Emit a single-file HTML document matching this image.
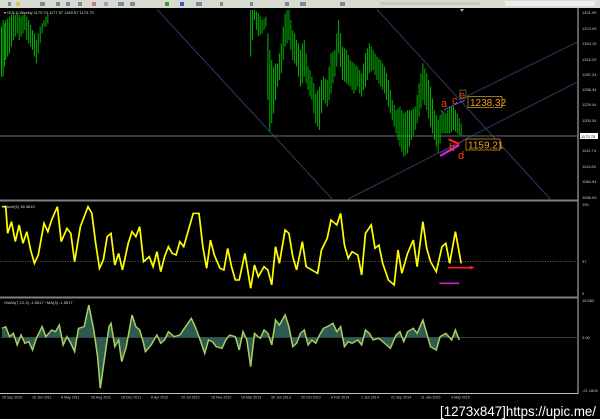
<!DOCTYPE html>
<html><head><meta charset="utf-8"><style>
html,body{margin:0;padding:0;background:#000;width:600px;height:419px;overflow:hidden;font-family:"Liberation Sans",sans-serif}
svg{position:absolute;left:0;top:0}
</style></head><body>
<svg width="600" height="419" viewBox="0 0 600 419">
<rect x="0" y="0" width="600" height="419" fill="#000"/>
<rect x="0" y="0" width="600" height="8" fill="#d8dcd0"/>
<g fill="#7a8a9a">
<rect x="8" y="2" width="3" height="4"/><rect x="16" y="2" width="4" height="4" fill="#e0c060"/><rect x="40" y="2" width="5" height="4"/><rect x="56" y="2" width="4" height="4"/><rect x="66" y="2" width="4" height="4"/><rect x="78" y="2" width="4" height="4"/><rect x="92" y="2" width="4" height="4" fill="#c08080"/><rect x="104" y="2" width="4" height="4" fill="#a0a0c0"/><rect x="118" y="2" width="6" height="4"/><rect x="130" y="2" width="5" height="4"/><rect x="165" y="2" width="4" height="4" fill="#30a030"/><rect x="180" y="2" width="4" height="4" fill="#3060c0"/><rect x="196" y="2" width="6" height="4"/><rect x="220" y="2" width="3" height="4"/><rect x="250" y="2" width="3" height="4"/><rect x="285" y="2" width="4" height="4"/><rect x="300" y="2" width="6" height="4"/><rect x="340" y="2" width="5" height="4"/><rect x="380" y="2" width="100" height="3" fill="#c8ccc0"/><rect x="505" y="1" width="90" height="5" fill="#eee"/>
</g>
<rect x="0" y="8" width="578" height="386" fill="#000"/>
<line x1="578" y1="8" x2="578" y2="394" stroke="#c0c0c0" stroke-width="1"/>
<rect x="0" y="199.5" width="578" height="2" fill="#808080"/>
<rect x="0" y="296.5" width="578" height="2" fill="#808080"/>
<line x1="0" y1="393.5" x2="578" y2="393.5" stroke="#c0c0c0"/>

<g transform="scale(0.3827,0.3333)">
<g stroke="#2e3560" stroke-width="3" fill="none">
<line x1="410" y1="28" x2="870" y2="600"/>
<line x1="985" y1="28" x2="1440" y2="600"/>
<line x1="905" y1="600" x2="1510" y2="245"/>
<line x1="1200" y1="300" x2="1510" y2="125"/>
<line x1="1150" y1="460" x2="1215" y2="420"/>
</g>
<line x1="0" y1="408" x2="1510" y2="408" stroke="#707070" stroke-width="3"/>
<path stroke="#00b400" stroke-width="2.6" fill="none" d="M4 80V230M8 60V230M12 70V200M15 60V180M20 55V170M25 50V160M30 45V140M35 40V120M40 45V110M45 40V100M50 45V120M55 50V110M60 45V100M65 40V90M70 50V120M75 60V130M80 75V140M85 90V150M90 100V170M95 120V190M100 100V160M105 80V130M110 70V100M115 60V80M120 50V80M125 40V70M655 30V170M660 30V120M665 30V60M670 35V90M675 40V110M680 50V105M685 60V100M690 55V90M695 50V80M700 100V300M705 150V395M710 180V370M715 200V340M720 190V300M725 190V260M730 160V240M735 130V220M740 80V180M745 40V140M750 30V130M755 30V120M760 60V150M765 90V180M770 100V190M775 120V200M780 130V230M785 150V260M790 130V250M795 120V230M800 160V250M805 200V270M810 210V290M815 230V300M820 250V340M825 280V370M830 270V380M835 260V390M840 240V340M845 230V300M850 235V310M855 240V320M860 200V300M865 160V280M870 155V250M875 150V230M880 100V200M885 60V160M890 100V200M895 140V240M900 145V245M905 150V250M910 165V255M915 180V260M920 185V270M925 190V280M930 195V270M935 200V260M940 210V280M945 220V290M950 190V270M955 160V260M960 145V240M965 130V220M970 140V215M975 150V210M980 160V225M985 170V240M990 175V250M995 180V260M1000 190V270M1005 200V280M1010 220V300M1015 240V320M1020 270V340M1025 300V360M1030 315V380M1035 330V400M1040 325V420M1045 320V440M1050 330V455M1055 340V470M1060 335V465M1065 330V460M1070 330V440M1075 330V420M1080 325V405M1085 320V390M1090 285V370M1095 250V350M1100 220V325M1105 190V300M1110 205V315M1115 220V330M1120 240V355M1125 260V380M1130 295V400M1135 330V420M1140 345V440M1145 360V460M1150 345V430M1155 330V400M1160 335V400M1165 340V400M1170 330V400M1175 320V400M1180 320V395M1185 320V390M1190 330V395M1195 340V400M1200 355V405M1205 370V410"/>
<line x1="1150" y1="468" x2="1200" y2="435" stroke="#e020e0" stroke-width="6"/>
<line x1="1172" y1="418" x2="1200" y2="432" stroke="#ff2020" stroke-width="6"/>
<line x1="1160" y1="330" x2="1215" y2="300" stroke="#5060c0" stroke-width="3"/>
</g>
<g font-size="11" fill="#ff3a10">
<text x="441" y="107">a</text><text x="452" y="104">c</text><text x="459" y="99">e</text>
<text x="449" y="151">b</text><text x="458" y="159">d</text>
</g>
<rect x="460" y="90" width="6" height="8" fill="none" stroke="#a08050" stroke-width="0.6"/>
<rect x="468" y="96.5" width="34" height="11" fill="#000" stroke="#c89020" stroke-width="0.8"/>
<text x="470" y="106" font-size="10" fill="#f0a020">1238.32</text>
<rect x="466" y="139" width="34" height="11" fill="#000" stroke="#c89020" stroke-width="0.8"/>
<text x="468" y="148.5" font-size="10" fill="#f0a020">1159.21</text>
<text x="4" y="14" font-size="4" fill="#ddd">▾ GOLD,Weekly  1179.70 1177.57 1169.57 1173.75</text>
<polygon points="460,9 464,9 462,12" fill="#aaa"/>
<g font-size="4" fill="#ccc">
<text x="582" y="14">1401.99</text><text x="582" y="30">1373.09</text><text x="582" y="45">1344.19</text><text x="582" y="61">1315.29</text><text x="582" y="76">1287.24</text><text x="582" y="91">1258.34</text><text x="582" y="106">1229.44</text><text x="582" y="122">1200.54</text><text x="582" y="152">1142.74</text><text x="582" y="168">1113.84</text><text x="582" y="183">1084.94</text><text x="582" y="199">1056.09</text>
</g>
<rect x="580" y="133" width="18" height="6" fill="#fff"/>
<text x="581" y="138" font-size="4" fill="#000">1173.75</text>

<line x1="0" y1="261.5" x2="578" y2="261.5" stroke="#606060" stroke-dasharray="1,1.5"/>
<line x1="0" y1="337.5" x2="578" y2="337.5" stroke="#403048"/>
<g transform="translate(0,200) scale(0.3827,0.3333)">
<polyline fill="none" stroke="#ffff00" stroke-width="4.5" points="5,20 15,20 20,100 30,65 40,125 50,75 60,130 70,95 80,150 90,190 100,165 115,70 125,95 135,60 150,20 160,125 175,85 185,100 195,185 210,80 230,20 240,40 250,130 260,205 270,180 280,110 290,100 300,195 310,160 320,210 335,130 345,95 355,110 365,80 375,185 390,170 400,200 410,155 420,215 430,170 440,140 450,160 460,165 470,125 480,140 490,100 505,40 520,40 530,140 540,205 550,120 560,165 575,205 585,210 595,145 605,200 615,240 625,240 640,160 655,265 665,195 675,230 690,200 700,210 710,255 720,140 730,190 745,90 755,100 765,170 775,210 790,125 800,200 815,210 830,220 840,150 855,115 865,60 880,75 890,40 900,135 910,175 920,155 935,165 945,225 955,100 970,75 980,145 990,135 1000,190 1015,240 1030,255 1040,150 1050,220 1065,160 1080,120 1090,200 1105,65 1115,145 1125,185 1140,215 1155,140 1165,130 1175,190 1190,95 1205,190"/>
<line x1="1170" y1="203" x2="1232" y2="203" stroke="#ff2020" stroke-width="5"/>
<polygon points="1228,197 1240,203 1228,209" fill="#ff2020"/>
<line x1="1148" y1="250" x2="1200" y2="250" stroke="#d020d0" stroke-width="5"/>
<polygon fill="#2e5a50" points="5,412 5,385 15,380 25,410 35,400 45,435 55,405 65,430 75,425 85,450 95,415 110,380 120,410 135,390 145,395 155,375 165,435 175,410 185,430 195,455 205,385 220,380 232,315 245,390 255,470 262,565 275,460 285,380 290,370 300,440 310,420 318,485 330,440 345,345 355,380 365,390 375,430 380,455 395,435 410,405 420,430 430,420 440,395 455,410 470,405 485,380 500,355 510,380 520,410 535,460 545,420 555,425 565,440 580,445 590,420 600,405 615,410 625,450 635,395 645,420 655,500 665,400 680,415 690,390 700,400 710,435 720,360 730,375 745,345 755,380 765,440 775,430 785,400 795,390 805,435 815,420 825,430 835,405 845,385 855,380 870,370 880,395 890,380 900,440 910,425 920,430 935,420 945,435 955,390 965,400 975,420 990,415 1005,430 1020,445 1035,405 1045,395 1055,425 1065,395 1080,385 1090,400 1105,360 1115,400 1125,440 1140,450 1150,410 1165,400 1180,420 1190,390 1200,420 1200,412"/>
<polyline fill="none" stroke="#a8d060" stroke-width="4" points="5,385 15,380 25,410 35,400 45,435 55,405 65,430 75,425 85,450 95,415 110,380 120,410 135,390 145,395 155,375 165,435 175,410 185,430 195,455 205,385 220,380 232,315 245,390 255,470 262,565 275,460 285,380 290,370 300,440 310,420 318,485 330,440 345,345 355,380 365,390 375,430 380,455 395,435 410,405 420,430 430,420 440,395 455,410 470,405 485,380 500,355 510,380 520,410 535,460 545,420 555,425 565,440 580,445 590,420 600,405 615,410 625,450 635,395 645,420 655,500 665,400 680,415 690,390 700,400 710,435 720,360 730,375 745,345 755,380 765,440 775,430 785,400 795,390 805,435 815,420 825,430 835,405 845,385 855,380 870,370 880,395 890,380 900,440 910,425 920,430 935,420 945,435 955,390 965,400 975,420 990,415 1005,430 1020,445 1035,405 1045,395 1055,425 1065,395 1080,385 1090,400 1105,360 1115,400 1125,440 1140,450 1150,410 1165,400 1180,420 1190,390 1200,420"/>
</g>
<text x="4" y="208" font-size="4" fill="#ddd">Stoch(5) 36.3615</text>
<text x="4" y="304" font-size="4" fill="#ddd">OsMA(7,12,3) -1.5517   ~MA(3) -1.5517</text>
<g font-size="4" fill="#ccc">
<text x="582" y="206">100</text><text x="582" y="263">37</text><text x="582" y="295">0</text>
<text x="582" y="302">15.062</text><text x="582" y="339">0.00</text><text x="582" y="392">-21.1600</text>
</g>
<g font-size="3.6" fill="#ccc">
<text x="2" y="398.5">26 Sep 2010</text><text x="32" y="398.5">16 Jan 2011</text><text x="61" y="398.5">8 May 2011</text><text x="91" y="398.5">28 Aug 2011</text><text x="121" y="398.5">18 Dec 2011</text><text x="151" y="398.5">8 Apr 2012</text><text x="181" y="398.5">29 Jul 2012</text><text x="211" y="398.5">18 Nov 2012</text><text x="241" y="398.5">10 Mar 2013</text><text x="271" y="398.5">30 Jun 2013</text><text x="301" y="398.5">20 Oct 2013</text><text x="331" y="398.5">9 Feb 2014</text><text x="361" y="398.5">1 Jun 2014</text><text x="391" y="398.5">21 Sep 2014</text><text x="421" y="398.5">11 Jan 2015</text><text x="451" y="398.5">3 May 2015</text>
</g>
<text x="440" y="416" font-size="14" fill="#fff" font-family="Liberation Sans Narrow,Liberation Sans,sans-serif" textLength="156" lengthAdjust="spacingAndGlyphs">[1273x847]https://upic.me/</text>
</svg>
</body></html>
